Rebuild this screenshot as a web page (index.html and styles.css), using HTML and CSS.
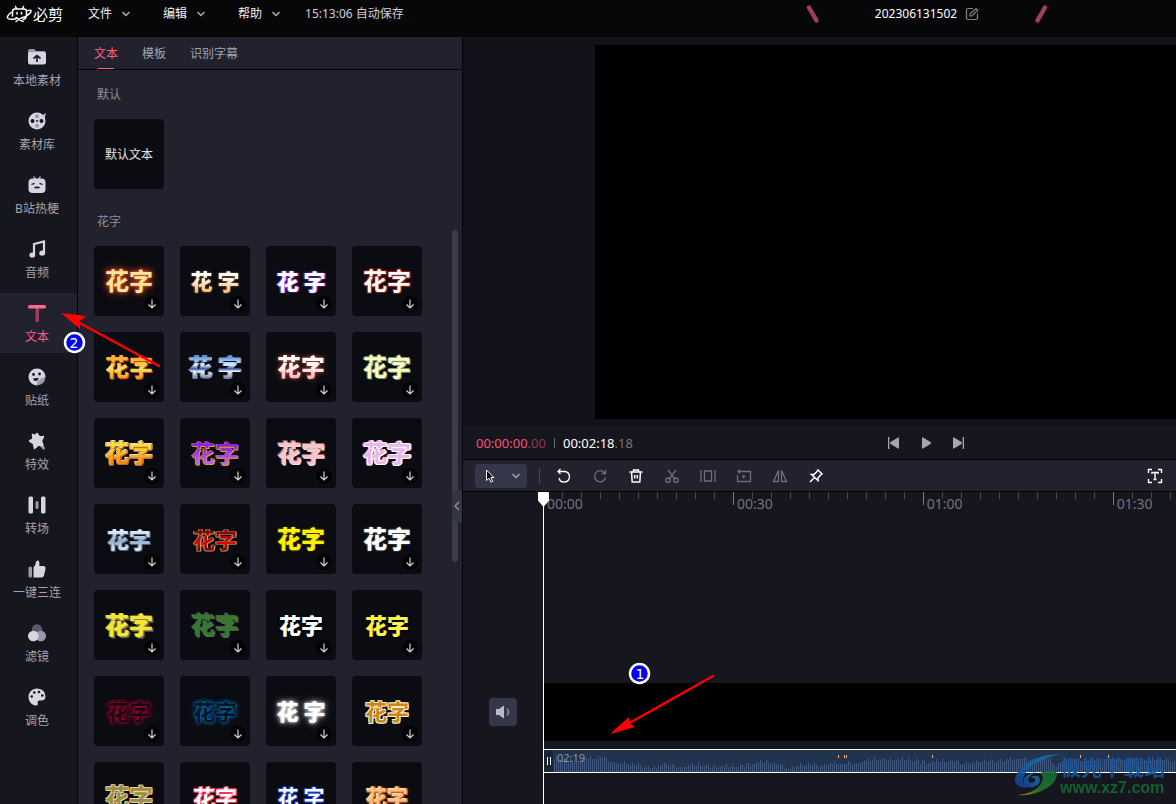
FILE: index.html
```html
<!DOCTYPE html>
<html lang="zh-CN">
<head>
<meta charset="utf-8">
<title>必剪</title>
<link rel="stylesheet" href="styles.css">
</head>
<body>
<svg class="defs" aria-hidden="true">
  <symbol id="down" viewBox="0 0 16 16"><path d="M8 3.500v8M4.500 8.500 8 12l3.500-3.500" fill="none" stroke="#d2d2d6" stroke-width="1.200"/></symbol>
  <symbol id="chev" viewBox="0 0 10 10"><path d="M1.500 3 5 6.500 8.500 3" fill="none" stroke="currentColor" stroke-width="1.400"/></symbol>
</svg>
<div class="app">
  <header class="topbar">
    <div class="brand">
      <svg width="26" height="20" viewBox="0 0 26 20" fill="none" stroke="#fff" stroke-width="1.500" stroke-linecap="round" stroke-linejoin="round"><path d="M9.500 2.500l1 2M17.500 2.500l-1 2M6.500 12V7.500Q6.500 5 9 5h9Q20.500 5 20.500 7.500v3q0 4-3 5M5 8.500Q0 12.500 2 14.500q2 1.500 8 .2M22 6.500q3.500-1 3 1-1 3-9 6.500"/><path d="M11 8.500v1.500M15.500 8.500v1.500M10 13.500l7 4M10 17.500l6-4"/></svg>
      <span>必剪</span>
    </div>
    <nav class="menus">
      <button>文件<svg width="10" height="10"><use href="#chev"/></svg></button>
      <button>编辑<svg width="10" height="10"><use href="#chev"/></svg></button>
      <button>帮助<svg width="10" height="10"><use href="#chev"/></svg></button>
    </nav>
    <span class="saved">15:13:06 自动保存</span>
    <div class="project">
      <svg width="16" height="20"><path d="M4 3.500 11.500 16.500" stroke="#9d3e5c" stroke-width="4.500" stroke-linecap="round"/></svg>
      <div class="name"><span>202306131502</span>
        <button aria-label="重命名"><svg width="14" height="14" fill="none" stroke="#85858a" stroke-width="1.200"><path d="M8 1.500H3Q1.500 1.500 1.500 3v8q0 1.500 1.500 1.500h8q1.500 0 1.500-1.500V6.500M5 9V7l6-5.500 1.800 1.800L7 9z"/></svg></button>
      </div>
      <svg width="16" height="20"><path d="M12 3.500 4.500 16.500" stroke="#9d3e5c" stroke-width="4.500" stroke-linecap="round"/></svg>
    </div>
  </header>

  <nav class="side">
    <button><svg width="20" height="20"><path d="M1 4q0-2 2-2h4l2 2h8q2 0 2 2v3H1z" fill="#9b9aad"/><rect x="1" y="5" width="18" height="12.500" rx="2.500" fill="#d6d6e2"/><path d="M10 15V9M6.500 11.500 10 8.500l3.500 3" stroke="#16161f" stroke-width="1.700" fill="none"/></svg>本地素材</button>
    <button><svg width="20" height="20"><path d="M16 4l3-2-1.500 5z" fill="#d6d6e2"/><circle cx="10" cy="10" r="8.500" fill="#d6d6e2"/><g fill="#16161f"><circle cx="5.500" cy="10" r="2"/><circle cx="14.500" cy="10" r="2"/><circle cx="10" cy="10" r="1"/></g><g fill="#9b9aad"><circle cx="10" cy="5.300" r="2"/><circle cx="10" cy="14.700" r="2"/></g></svg>素材库</button>
    <button><svg width="20" height="20"><path d="M6.500 1.500 8.500 4M13.500 1.500l-2 2.500" stroke="#9b9aad" stroke-width="1.500"/><rect x="1.500" y="3.500" width="17" height="14.500" rx="4" fill="#d6d6e2"/><path d="M4.500 9.500l3-1.200M15.500 9.500l-3-1.200M7.500 12q1.200 1.500 2.500 0 1.300 1.500 2.500 0" stroke="#16161f" stroke-width="1.300" fill="none"/></svg>B站热梗</button>
    <button><svg width="20" height="20"><path d="M7 15.500V5l10-2.500v11.500" fill="none" stroke="#d6d6e2" stroke-width="2.200"/><ellipse cx="5.300" cy="16" rx="2.900" ry="2.600" fill="#d6d6e2"/><ellipse cx="15.200" cy="14.200" rx="2.900" ry="2.600" fill="#d6d6e2"/></svg>音频</button>
    <button class="on"><svg width="20" height="20"><rect x="8.500" y="3" width="3.500" height="16" rx="1.500" fill="#9d3e5c"/><rect x="1" y="2" width="18" height="3.500" rx="1.500" fill="#ff6a92"/></svg>文本</button>
    <button><svg width="20" height="20"><path d="M10 1.500a8.500 8.500 0 1 0 0 17L18.500 10A8.500 8.500 0 0 0 10 1.500" fill="#d6d6e2"/><path d="M9.500 18.500q.5-7.500 9-8.500-.8 8-9 8.500" fill="#9b9aad"/><g fill="#16161f"><circle cx="6.500" cy="7.500" r="1.400"/><circle cx="12.500" cy="7" r="1.400"/><path d="M6 11.500l5.500-.8q-.5 3.300-3 3.300-2 0-2.500-2.500"/></g></svg>贴纸</button>
    <button><svg width="20" height="20"><path d="M12.500 13l5 5" stroke="#9b9aad" stroke-width="2.500"/><path d="M10 2.500l2.500 3.500 4-.5-2 4.500 1.500 4.500-4.500-.5-4 3.500-1-5L2.500 10l3.500-2-.5-4.500 3 1z" fill="#d6d6e2" stroke="#d6d6e2" stroke-width="1.500" stroke-linejoin="round"/></svg>特效</button>
    <button><svg width="20" height="20"><g fill="#d6d6e2"><rect x="1.500" y="1.500" width="4.500" height="17" rx="1.500"/><rect x="14" y="1.500" width="4.500" height="17" rx="1.500"/></g><rect x="8.500" y="6" width="3" height="8" rx="1.500" fill="#9b9aad"/></svg>转场</button>
    <button><svg width="20" height="20"><rect x="1.500" y="7.500" width="3.500" height="11" rx="1.500" fill="#9b9aad"/><path d="M6.500 18.500v-10Q8.500 7 9 3q.5-2 2-1.500 2 .7 1.300 5.500H17q2 .5 1.500 3l-1.500 6.500q-.6 2-2.500 2z" fill="#d6d6e2"/></svg>一键三连</button>
    <button><svg width="20" height="20"><circle cx="10" cy="6.500" r="5.200" fill="#5b5a6d"/><circle cx="13.800" cy="13" r="5.200" fill="#9b9aad"/><circle cx="6.300" cy="13" r="5.300" fill="#d6d6e2"/></svg>滤镜</button>
    <button><svg width="20" height="20"><path d="M10 1.500C5 1.500 1.500 5.500 1.500 10S5 18.500 9 18.500q2.500-.3 1.700-2.500-.5-2.800 2.300-2.500 5 .7 5.500-3.500.2-8-8.500-8.500" fill="#d6d6e2"/><g fill="#16161f"><circle cx="4.700" cy="9.500" r="1.300"/><circle cx="7.300" cy="5.500" r="1.300"/><circle cx="12" cy="5" r="1.300"/><circle cx="15.300" cy="8.500" r="1.300"/></g></svg>调色</button>
  </nav>

  <section class="panel">
    <div class="tabs" role="tablist">
      <button class="on" role="tab" aria-selected="true">文本</button>
      <button role="tab">模板</button>
      <button role="tab">识别字幕</button>
    </div>
    <div class="library">
      <h2>默认</h2>
      <div class="tiles"><button class="plain">默认文本</button></div>
      <h2>花字</h2>
      <div class="tiles">
        <button><b class="f1">花字</b><svg><use href="#down"/></svg></button>
        <button><b class="f2 small">花 字</b><svg><use href="#down"/></svg></button>
        <button><b class="f3 small">花 字</b><svg><use href="#down"/></svg></button>
        <button><b class="f4">花字</b><svg><use href="#down"/></svg></button>
        <button><b class="f5">花字</b><svg><use href="#down"/></svg></button>
        <button><b class="f6">花 字</b><svg><use href="#down"/></svg></button>
        <button><b class="f7">花字</b><svg><use href="#down"/></svg></button>
        <button><b class="f8">花字</b><svg><use href="#down"/></svg></button>
        <button><b class="f9">花字</b><svg><use href="#down"/></svg></button>
        <button><b class="f10">花字</b><svg><use href="#down"/></svg></button>
        <button><b class="f11">花字</b><svg><use href="#down"/></svg></button>
        <button><b class="f12">花字</b><svg><use href="#down"/></svg></button>
        <button><b class="f13 small">花字</b><svg><use href="#down"/></svg></button>
        <button><b class="f14 small">花字</b><svg><use href="#down"/></svg></button>
        <button><b class="f15">花字</b><svg><use href="#down"/></svg></button>
        <button><b class="f16">花字</b><svg><use href="#down"/></svg></button>
        <button><b class="f17">花字</b><svg><use href="#down"/></svg></button>
        <button><b class="f18">花字</b><svg><use href="#down"/></svg></button>
        <button><b class="f19 small">花字</b><svg><use href="#down"/></svg></button>
        <button><b class="f20 small">花字</b><svg><use href="#down"/></svg></button>
        <button><b class="f21 small">花字</b><svg><use href="#down"/></svg></button>
        <button><b class="f22 small">花字</b><svg><use href="#down"/></svg></button>
        <button><b class="f23 small">花 字</b><svg><use href="#down"/></svg></button>
        <button><b class="f24 small">花字</b><svg><use href="#down"/></svg></button>
        <button><b class="f25">花字</b><svg><use href="#down"/></svg></button>
        <button><b class="f26 small">花字</b><svg><use href="#down"/></svg></button>
        <button><b class="f27 tiny">花 字</b><svg><use href="#down"/></svg></button>
        <button><b class="f28 tiny">花字</b><svg><use href="#down"/></svg></button>
      </div>
    </div>
    <div class="scroll"></div>
    <button class="collapse" aria-label="收起"><svg width="6" height="10" fill="none" stroke="#9b9aad" stroke-width="1.200"><path d="M5 1 1 5l4 4"/></svg></button>
  </section>

  <main class="work">
    <div class="preview"><div class="screen"></div></div>
    <div class="transport">
      <div class="times"><span class="now">00:00:00<i>.00</i></span><span class="bar"></span><span class="total">00:02:18<i>.18</i></span></div>
      <div class="play">
        <button aria-label="上一帧"><svg width="16" height="16" fill="#a3a3b5"><path d="M2 2h1.300v12H2zM13 3v10q0 1-1 .5L4.500 9q-1-1 0-2L12 2.500q1-.5 1 .5"/></svg></button>
        <button aria-label="播放"><svg width="16" height="16" fill="#a3a3b5"><path d="M4 3v10q0 1 1 .5L12.500 9q1-1 0-2L5 2.500Q4 2 4 3"/></svg></button>
        <button aria-label="下一帧"><svg width="16" height="16" fill="#a3a3b5"><path d="M12.700 2H14v12h-1.300zM3 3v10q0 1 1 .5L11.500 9q1-1 0-2L4 2.500Q3 2 3 3"/></svg></button>
      </div>
    </div>
    <div class="tools">
      <button class="pick" aria-label="选择"><svg width="14" height="16"><path d="M4.500 2v10.500L7 10.200l2 4 1.700-.8-1.900-3.800H12z" fill="#000" stroke="#fff" stroke-width="1"/></svg><svg width="10" height="10"><use href="#chev"/></svg></button>
      <span class="sep"></span>
      <div class="group">
        <button aria-label="撤销"><svg viewBox="0 0 16 16"><path d="M2 3.500h7a5.300 5.300 0 1 1-6 6.500M4.500 1 2 3.500 4.500 6"/></svg></button>
        <button class="dim" aria-label="重做"><svg viewBox="0 0 16 16"><path d="M13 5.500a5.600 5.600 0 1 0 .6 4M13.500 1.500v4H9.500"/></svg></button>
        <button aria-label="删除"><svg viewBox="0 0 16 16"><path d="M1.500 4h13M5.500 4V2h5v2M3.500 4l.7 10h7.600l.7-10M6.700 7v3.500M9.300 7v3.500" stroke-width="1.500"/></svg></button>
        <button class="dim" aria-label="分割"><svg viewBox="0 0 16 16"><path d="M4 2l7 9M12 2 5 11"/><circle cx="4" cy="12.200" r="2.200"/><circle cx="12" cy="12.200" r="2.200"/></svg></button>
        <button class="dim" aria-label="裁剪"><svg viewBox="0 0 16 16"><path d="M1 2v12M15 2v12M4.500 3h7v10h-7z"/></svg></button>
        <button class="dim" aria-label="倒放"><svg viewBox="0 0 16 16"><path d="M4 1.500 2 3.500l2 2M2 3.500h12.500v10h-13V7"/><path d="M6.500 6.500v4L10 8.500z" fill="currentColor" stroke="none"/></svg></button>
        <button class="dim" aria-label="镜像"><svg viewBox="0 0 16 16"><path d="M6.500 2.500V13.500H1.500zM9.500 2.500V13.500h5z"/></svg></button>
        <button aria-label="定格"><svg viewBox="0 0 16 16"><path d="M10 2l4 4-1.500 1-2.500 3v2.500L3.500 6.500H6l3-3zM6.500 9.500 2 14" stroke-width="1.500"/></svg></button>
      </div>
      <button class="fit" aria-label="文字识别"><svg viewBox="0 0 16 16"><path d="M1.500 5V1.500H5M11 1.500h3.500V5M14.500 11v3.500H11M5 14.500H1.500V11M5 6V4.500h6V6M8 4.500v7M6.500 11.500h3" stroke-width="1.400"/></svg></button>
    </div>
    <div class="timeline">
      <div class="heads"><button aria-label="静音"><svg width="18" height="16"><path d="M2 5h3l5-3.500v13L5 11H2z" fill="#bbbbc5"/><path d="M13 4.500q3 3.500 0 7" fill="none" stroke="#83838f" stroke-width="1.800"/></svg></button></div>
      <div class="tracks">
        <div class="ruler" id="ruler"></div>
        <div class="lanes">
          <div class="video"></div>
          <div class="audio"><span class="grip"></span><svg id="wave" class="wave"></svg><span class="len">02:19</span></div>
        </div>
        <svg class="head" width="11" height="15"><path d="M0 1q0-1 1-1h9q1 0 1 1v7.500L5.500 15 0 8.500z" fill="#fff"/></svg>
      </div>
    </div>
  </main>

  <svg class="notes" aria-hidden="true">
    <g stroke="#f00" fill="#f00" stroke-linecap="round"><path d="M713 676 626 725" stroke-width="2.500"/><path d="M610 734l19-17 0 6 6 4z" stroke="none"/><path d="M159 366 76 321" stroke-width="2.500"/><path d="M61 313l25 3-6 5 0 8z" stroke="none"/></g>
    <g class="pin"><circle cx="639.500" cy="673.500" r="9.500"/><text x="640" y="679">1</text><circle cx="74.500" cy="342.500" r="9.500"/><text x="74" y="348">2</text></g>
  </svg>
  <div class="mark">
    <svg width="46" height="44" viewBox="0 0 46 44"><defs><linearGradient id="ma" x1="1" y1="0" x2="0" y2="1"><stop offset="0" stop-color="#1d7791"/><stop offset=".5" stop-color="#1660a0"/><stop offset="1" stop-color="#163a91"/></linearGradient><linearGradient id="mb" x1="1" y1="0" x2="0" y2="1"><stop offset="0" stop-color="#11683c"/><stop offset=".6" stop-color="#25752a"/><stop offset="1" stop-color="#a58a16"/></linearGradient></defs><path d="M46 1Q26 1 12 11-4 24 3 32q5 4 13 2-10-3-6-11Q16 9 46 1" fill="url(#ma)"/><path d="M22 19q-15 3-12 12 4 6 12 2 6-4 3-9-5-3-9 1 6-1 5 3-2 3-6 1-3-5 7-10" fill="url(#ma)"/><path d="M26 20q14-6 17 0 0 13-21 20-10 3-18 2 16-2 22-10 6-8 0-12" fill="url(#mb)"/></svg>
    <div><strong>极光下载站</strong><span>www.xz7.com</span></div>
  </div>
</div>
<script src="app.js"></script>
</body>
</html>
```
FILE: styles.css
```css
* { box-sizing: border-box; }
body { margin: 0; background: #16161f; color: #a3a3ad; font: 12px/18px "Noto Sans", "Noto Sans CJK SC", sans-serif; }
button { padding: 0; border: 0; background: none; color: inherit; font: inherit; display: flex; align-items: center; justify-content: center; }
svg { display: block; flex: none; }
.defs { position: absolute; width: 0; height: 0; }
i { font-style: normal; }

.app { position: relative; height: 100vh; overflow: hidden; display: grid; grid-template-columns: 78px 385px 1fr; grid-template-rows: 37px 1fr; }

.topbar { grid-column: 1 / -1; background: #070709; padding: 0 127px 9px 6px; display: flex; align-items: center; color: #f0f0f2; }
.brand { display: flex; align-items: center; gap: 1px; width: 82px; font-size: 15px; color: #fff; }
.menus { display: flex; gap: 32px; }
.menus button { gap: 9px; }
.menus svg { color: #b0b0b8; }
.saved { margin-left: 24px; color: #cfcfd2; }
.project { margin-left: auto; width: 244px; display: flex; align-items: center; justify-content: space-between; }
.name { display: flex; align-items: center; gap: 8px; color: #fff; }

.side { border-right: 1px solid #050508; display: flex; flex-direction: column; gap: 4px; overflow: hidden; }
.side button { flex: none; height: 60px; flex-direction: column; gap: 5px; padding: 3px 3px 0 0; }
.side .on { background: #21222d; color: #ff5c88; }

.panel { position: relative; background: #21222d; border-right: 1px solid #050508; overflow: hidden; display: flex; flex-direction: column; }
.tabs { flex: none; height: 33px; border-bottom: 1px solid #050508; display: flex; gap: 24px; padding-left: 16px; }
.tabs button { position: relative; padding-top: 2px; }
.tabs .on { color: #ff5c88; }
.tabs .on::after { content: ""; position: absolute; left: 4px; right: 4px; bottom: 0; height: 1px; background: #ff5c88; }
.library { padding: 0 16px; }
h2 { margin: 0; padding: 16px 3px 15px; font-size: 12px; font-weight: 400; line-height: 18px; color: #8e8e96; }
.tiles { display: grid; grid-template-columns: repeat(4, 70px); gap: 16px; }
.tiles + h2 { padding-top: 24px; }
.tiles button { position: relative; height: 70px; border-radius: 4px; background: #0b0c11; }
.tiles .plain { color: #e3e3e6; padding-top: 2px; }
.tiles svg { position: absolute; right: 4px; bottom: 4px; width: 16px; height: 16px; border-radius: 50%; background: #040406; }
.tiles b { padding-bottom: 2px; font: 900 24px/34px "Noto Sans CJK SC", sans-serif; white-space: nowrap; }
.tiles .small { font-size: 22px; }
.tiles .tiny { font-size: 21px; }
.tiles :is(.f1, .f4, .f8, .f9, .f10, .f11, .f12, .f14, .f18, .f21, .f22, .f24, .f25, .f26, .f27, .f28) { font-weight: 700; }

.f1 { color: #ffe79a; text-shadow: 0 0 2px #ff6a32, 0 0 5px #d9402c, 0 0 10px #a8382c; }
.f2, .f5, .f6, .f7, .f9, .f10, .f13, .f14 { color: transparent; -webkit-background-clip: text; background-clip: text; }
.f2 { background-image: linear-gradient(#fff 40%, #f7b96a 80%); filter: drop-shadow(0 0 1px #a06a3c); }
.f3 { color: #fff; text-shadow: -1px 0 #2c3cff, 1px 0 #ff2ee0, 0 0 2px #a040ff; }
.f4 { color: #fff; text-shadow: 1px 1px #8a1a18, -1px -1px #8a1a18, 1px -1px #8a1a18, -1px 1px #8a1a18; }
.f5 { background-image: linear-gradient(#ffb02e 30%, #ffe066 55%, #ff9a1e 80%); filter: drop-shadow(1px 1px 0 #c4440c); }
.f6 { background-image: linear-gradient(#5a90dd 20%, #d8f0ff 45%, #2f52b8 55%, #eef2fa 62%, #6a6c86 85%); filter: drop-shadow(1px 0 0 #8c98b0) drop-shadow(-1px 0 0 #56688c); }
.f7 { background-image: linear-gradient(#fff 45%, #ffb4c0 80%); filter: drop-shadow(0 0 2px #c8482c); }
.f8 { color: #fbfad0; text-shadow: 1px 1px #7f9a56, -1px 0 #7f9a56, 0 -1px #7f9a56; }
.f9 { background-image: linear-gradient(#ffe23a 30%, #ff8a10 75%); filter: drop-shadow(1px 0 0 #b8620c) drop-shadow(-1px 0 0 #d8a878) drop-shadow(0 1px 0 #b86a2c) drop-shadow(0 -1px 0 #e8dccb); }
.f10 { background-image: linear-gradient(#8c22e8 35%, #b960f5 75%); filter: drop-shadow(-1px 0 0 #c88a28) drop-shadow(1px 1px 0 #e5a020); }
.f11 { color: #ffc0d2; text-shadow: 1px 1px #f4e0c8, -1px -1px #8c7464, 1px -1px #8c7464; }
.f12 { color: #e8b8ec; text-shadow: 1px 1px #fff, 1px -1px #fff, -1px 1px #fff, -1px -1px #ff9cbc, 2px 0 #f4e6fa, -2px 0 #c87898; }
.f13 { background-image: linear-gradient(#dceafa 30%, #90aecb 55%, #d6e6f4 80%); filter: drop-shadow(1px 1px 0 #515f78) drop-shadow(-1px 0 0 #515f78); }
.f14 { background-image: linear-gradient(#8c0808 35%, #dd0808 60%, #7a0505 80%); filter: drop-shadow(1px 0 0 #c8a888) drop-shadow(-1px 0 0 #ae8c68) drop-shadow(0 1px 0 #806038); }
.f15 { color: #fff000; text-shadow: 0 0 2px #6c6600; }
.f16 { color: #fff; text-shadow: 0 0 2px #777; }
.f17 { color: #f5e532; text-shadow: 1px 1px #85845c, 2px 2px #4a4b45, -1px 0 #9c941c; }
.f18 { color: #347a2a; text-shadow: 1px 1px #556c4c, -1px -1px #4a5a48; }
.f19 { color: #fff; text-shadow: 0 0 3px #000, 2px 2px #000; }
.f20 { color: #fff04c; text-shadow: 0 0 3px #000, 1px 2px #000; }
.f21 { color: #17080e; text-shadow: 0 0 2px #a00038, 0 0 3px #a00038, 0 0 5px #a00038; }
.f22 { color: #08131c; text-shadow: 0 0 2px #0068b4, 0 0 3px #0068b4, 0 0 5px #0068b4; }
.f23 { color: #fff; text-shadow: 0 0 3px #fff, 0 0 7px #ccc; }
.f24 { color: #c88718; text-shadow: 1px 1px #fff0d0, -1px -1px #fff0d0, 1px -1px #fff0d0, -1px 1px #fff0d0; }
.f25 { color: #a08c42; text-shadow: 1px 1px #e2d4a0, -1px -1px #e2d4a0, 1px -1px #d0bf80, -1px 1px #d0bf80; }
.f26 { color: #fff; text-shadow: 1px 1px #f2365c, -1px -1px #f2365c, 1px -1px #ff7f95, -1px 1px #f2365c; }
.f27 { color: #fff; text-shadow: 1px 1px #1838d0, -1px -1px #1838d0, 1px -1px #1838d0, -1px 1px #1838d0; }
.f28 { color: #ffc284; text-shadow: 1px 1px #c0602c, -1px -1px #ffdf9c, 1px -1px #b04c24, -1px 1px #b04c24, 0 0 3px #d8662c; }

.scroll { position: absolute; right: 4px; top: 193px; width: 6px; height: 332px; border-radius: 3px; background: #3b3c4b; }
.collapse { position: absolute; right: 0; top: 453px; width: 10px; height: 32px; border-radius: 5px 0 0 5px; background: #343544; }

.work { min-width: 0; display: grid; grid-template-rows: 390fr 32px 33px 312fr; }
.preview { background: #12121a; padding: 8px 0 8px 132px; display: flex; }
.screen { flex: 1; background: #000; }
.transport { display: flex; align-items: center; justify-content: space-between; padding: 0 210px 0 13px; }
.times { display: flex; align-items: center; gap: 8px; font-size: 13px; }
.now { color: #f65278; }
.now i { color: #943850; }
.total { color: #fff; }
.total i { color: #74747a; }
.bar { width: 1px; height: 10px; background: #6c6c76; }
.play { display: flex; gap: 16px; }

.tools { background: #21222d; border: solid #020203; border-width: 1px 0; display: flex; align-items: center; padding: 0 13px 0 12px; }
.pick { width: 52px; height: 24px; border-radius: 4px; background: #353649; color: #a9a9b4; gap: 15px; }
.sep { width: 1px; height: 16px; margin: 0 16px 0 12px; background: #454657; }
.group { display: flex; gap: 20px; }
.group svg, .fit svg { width: 16px; height: 16px; fill: none; stroke: currentColor; stroke-width: 1.3; }
.group button, .fit { color: #fff; }
.group .dim { color: #6e6e79; }
.fit { margin-left: auto; }

.timeline { display: grid; grid-template-columns: 80px 1fr; min-height: 0; }
.heads { display: flex; align-items: flex-end; justify-content: flex-end; padding: 0 26px 78px 0; }
.heads button { width: 28px; height: 28px; border-radius: 4px; background: #353649; }
.tracks { position: relative; min-width: 0; border-left: 1px solid #fff; display: flex; flex-direction: column; justify-content: space-between; }
.head { position: absolute; left: -6px; top: 0; }
.ruler { display: flex; overflow: hidden; height: 24px; margin-left: -1px; }
.span { flex: 0 0 30%; position: relative; display: grid; grid-template-columns: repeat(10, 1fr); }
.span i { height: 7px; border-left: 1px solid #46464f; }
.span i:first-child { height: 13px; border-color: #777780; }
.span:first-child i:first-child { border-color: #fff; }
.span span { position: absolute; left: 4px; top: 3px; font-size: 14px; color: #73747c; }
.lanes { padding-bottom: 31px; display: flex; flex-direction: column; gap: 8px; }
.video { height: 58px; background: #000; }
.audio { position: relative; height: 24px; border: solid #fff; border-width: 1px 0; background: #223350; display: flex; }
.grip { width: 9px; background: #1a2433; display: flex; align-items: center; justify-content: center; gap: 2px; }
.grip::before, .grip::after { content: ""; width: 1px; height: 8px; background: #fff; }
.wave { flex: 1; min-width: 0; height: 22px; shape-rendering: crispEdges; }
.len { position: absolute; left: 13px; top: 0; font-size: 11px; line-height: 16px; color: #8a94a5; }

.notes { position: absolute; inset: 0; width: 100%; height: 100%; pointer-events: none; }
.pin circle { fill: #0000f5; stroke: #fff; stroke-width: 2.5; }
.pin text { fill: #fff; font: 14px "DejaVu Sans", sans-serif; text-anchor: middle; }
.mark { position: absolute; right: 11px; bottom: 7px; display: flex; opacity: 0.9; }
.mark div { display: flex; flex-direction: column; }
.mark strong { font: 700 21px/26px "Noto Sans CJK SC", sans-serif; color: #15559c; }
.mark span { font: 700 16px/18px "Liberation Sans", sans-serif; color: #126834; }
```
FILE: app.js
```js
// Ruler: one block per 30 seconds, ten ticks each.
const ruler = document.getElementById('ruler');
['00:00', '00:30', '01:00', '01:30'].forEach(label => {
  const block = document.createElement('div');
  block.className = 'span';
  block.innerHTML = '<i></i>'.repeat(10) + `<span>${label}</span>`;
  ruler.append(block);
});

// Waveform: level envelope as [x, height] pairs, with a small ripple on top.
const envelope = [[0, 13], [15, 11], [50, 14], [62, 9], [90, 6], [105, 4], [110, 9], [118, 6], [150, 6], [185, 5],
  [200, 9], [215, 9], [235, 4], [255, 7], [290, 8], [310, 11], [340, 13], [370, 10], [395, 10], [420, 9],
  [450, 12], [470, 13], [485, 14], [495, 13], [503, 5], [512, 12], [530, 11], [560, 12], [700, 12], [2000, 12]];
const ripple = [0, -1, 2, 0, 1, -2, 0, 3, -1, 1, 0];
let bars = '';
let seg = 0;
for (let x = 1, n = 0; x < 1900; x += 2, n++) {
  while (x > envelope[seg + 1][0]) seg++;
  const [x0, h0] = envelope[seg], [x1, h1] = envelope[seg + 1];
  const h = Math.max(3, Math.round(h0 + (h1 - h0) * (x - x0) / (x1 - x0)) + ripple[(n * 7 + (n >> 3)) % ripple.length]);
  bars += `M${x} 22h1v-${h}h-1z`;
}
const peaks = [285, 291, 293, 379, 527, 555].map(x => `M${x} 5h1v3h-1z`).join('');
document.getElementById('wave').innerHTML = `<path d="${bars}" fill="#41587e"/><path d="${peaks}" fill="#f5b35c"/>`;
```
